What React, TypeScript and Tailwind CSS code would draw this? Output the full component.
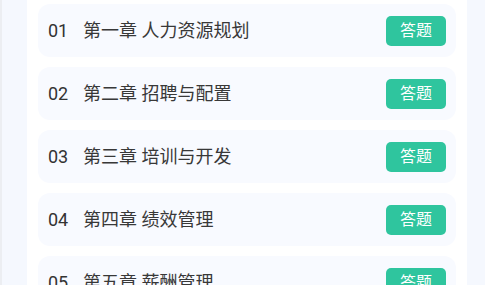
const chapters = [
  { no: '01', title: '第一章 人力资源规划' },
  { no: '02', title: '第二章 招聘与配置' },
  { no: '03', title: '第三章 培训与开发' },
  { no: '04', title: '第四章 绩效管理' },
  { no: '05', title: '第五章 薪酬管理' },
];

export default function App() {
  return (
    <div
      className="flex h-[285px] w-[485px] overflow-hidden bg-[#f5f8fe]"
      style={{ fontFamily: 'Roboto, "Noto Sans CJK SC", sans-serif' }}
    >
      <div className="w-[27px] shrink-0 border-l-2 border-[#eceef2]" />
      <div className="flex w-[440px] shrink-0 flex-col gap-[10px] bg-white px-[11px] pt-[4px]">
        {chapters.map((c) => (
          <div
            key={c.no}
            className="flex h-[53px] shrink-0 items-center rounded-[12px] bg-[#f8faff] pl-[10px] pr-[10px]"
          >
            <span className="w-[35px] text-[18px] text-[#333]">{c.no}</span>
            <span className="flex-1 text-[18px] text-[#383838]">{c.title}</span>
            <button className="flex h-[30px] w-[60px] items-center justify-center rounded-[5px] bg-[#2fc59e] text-[16px] text-white">
              答题
            </button>
          </div>
        ))}
      </div>
    </div>
  );
}
